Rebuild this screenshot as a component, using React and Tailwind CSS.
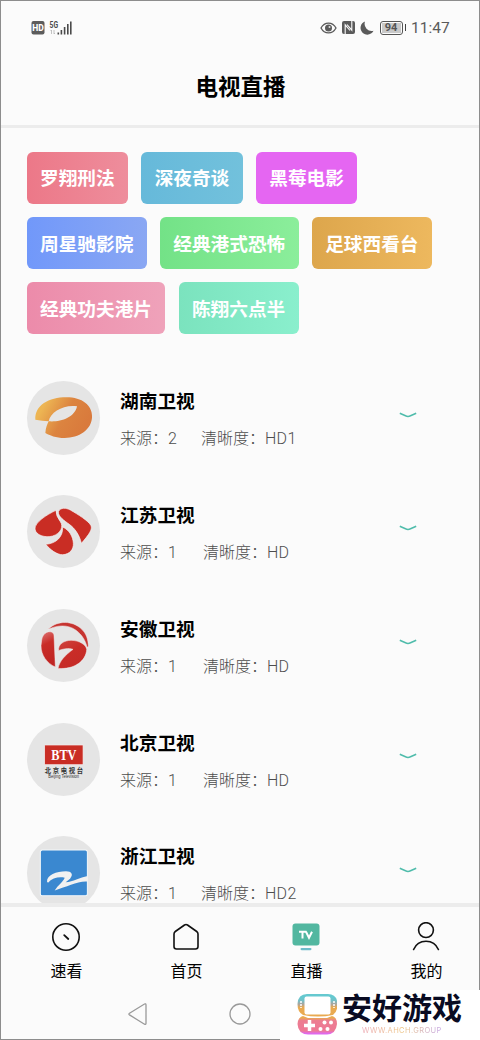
import React, { useState } from 'react';

const tags = [
  { name: '罗翔刑法', color: 'bg-linear-to-r from-[#ec7888] to-[#ee8d9c]' },
  { name: '深夜奇谈', color: 'bg-linear-to-r from-[#66b9da] to-[#72c1dc]' },
  { name: '黑莓电影', color: 'bg-[#e566f2]' },
  { name: '周星驰影院', color: 'bg-linear-to-r from-[#7198fa] to-[#8aa7f3]' },
  { name: '经典港式恐怖', color: 'bg-linear-to-r from-[#73e287] to-[#8bee9b]' },
  { name: '足球西看台', color: 'bg-linear-to-r from-[#dda64c] to-[#edb85e]' },
  { name: '经典功夫港片', color: 'bg-linear-to-r from-[#ec8baa] to-[#efa2ba]' },
  { name: '陈翔六点半', color: 'bg-linear-to-r from-[#7be3be] to-[#8aefcd]' },
];

const HunanLogo = () => (
  <svg viewBox="80 62 220 220" className="h-full w-full">
    <defs>
      <linearGradient id="hunan" x1="0" y1="0" x2="1" y2="0.4">
        <stop offset="0.2" stopColor="#edb553" />
        <stop offset="0.6" stopColor="#dc8440" />
        <stop offset="1" stopColor="#d97a3c" />
      </linearGradient>
    </defs>
    <path
      d="M105 178C103 135 145 111 198 111C246 111 275 135 275 168C275 209 235 233 193 233C166 233 148 225 135 218C136 204 140 193 145 183Q126 181 105 178ZM145 183C178 186 223 173 230 138C190 132 150 155 145 183Z"
      fill="url(#hunan)"
      fillRule="evenodd"
    />
  </svg>
);

const JiangsuLogo = () => (
  <svg viewBox="80 403 220 220" className="h-full w-full">
    <g fill="#c92d24" stroke="#f7f5f5" strokeWidth="2">
      <path d="M167 449C139 462 103 485 104 505C106 524 135 532 157 526C182 518 190 497 180 483Q166 465 167 449Z" />
      <path d="M174 453C180 440 197 441 210 448C232 461 264 480 272 495C276 507 267 520 243 548C237 521 222 502 207 491C192 480 173 468 174 453Z" />
      <path d="M187 499C188 528 169 548 136 551C151 568 169 582 187 582C208 581 220 566 219 548C218 528 207 508 187 499Z" />
    </g>
  </svg>
);

const AnhuiLogo = () => (
  <svg viewBox="80 55 220 220" className="h-full w-full">
    <defs>
      <linearGradient id="anhui" x1="0" y1="0" x2="0.2" y2="1">
        <stop offset="0" stopColor="#dd7777" />
        <stop offset="0.4" stopColor="#c92d28" />
        <stop offset="1" stopColor="#bf2422" />
      </linearGradient>
      <linearGradient id="anhui-leaf" x1="0" y1="0" x2="0.6" y2="1">
        <stop offset="0" stopColor="#cf4640" />
        <stop offset="0.5" stopColor="#c92d28" />
        <stop offset="1" stopColor="#c42a26" />
      </linearGradient>
    </defs>
    <g stroke="#f5efef" strokeWidth="1.5">
      <path d="M143 116C174 86 218 92 241 113C259 129 263 146 264 167L260 170C256 151 246 133 226 118C202 101 171 103 143 116Z" fill="#c63430" />
      <path d="M124 148C127 124 149 118 158 127Q161 130 161 136L165 229C139 217 122 193 122 165Z" fill="url(#anhui)" />
      <path d="M175 180C172 160 192 149 212 149C238 149 257 163 259 176C257 211 222 237 173 233C178 210 194 194 218 176C205 171 185 175 175 180Z" fill="url(#anhui-leaf)" />
    </g>
  </svg>
);

const BeijingLogo = () => (
  <svg viewBox="80 396 220 220" className="h-full w-full">
    <rect x="133" y="462" width="115" height="59" fill="#c92d24" stroke="#f6eded" strokeWidth="2" />
    <text x="190.500" y="507" textAnchor="middle" textLength="76" lengthAdjust="spacingAndGlyphs" fontSize="46" fontWeight="700" fill="#fff" fontFamily="Liberation Serif, serif">BTV</text>
    <text x="133" y="546" textLength="115" fontSize="19" fontWeight="700" fill="#333" fontFamily="Noto Sans CJK SC, sans-serif">北京电视台</text>
    <text x="144" y="561" textLength="92" lengthAdjust="spacingAndGlyphs" fontSize="14" fill="#333" fontFamily="Liberation Sans, sans-serif">Beijing Television</text>
  </svg>
);

const ZhejiangLogo = () => (
  <svg viewBox="80 47 220 220" className="h-full w-full">
    <rect x="120" y="89" width="141" height="137" rx="6" fill="#3a88d0" stroke="#f3f8fa" strokeWidth="3" />
    <path
      d="M140 184C139 165 168 153 197 153C214 153 220 163 209 175L196 186C218 184 238 171 262 167V184C233 181 200 200 163 210C174 193 189 184 193 172C176 168 155 173 143 187Z"
      fill="#f1f1f1"
    />
  </svg>
);

const channels = [
  { name: '湖南卫视', source: 2, quality: 'HD1', Logo: HunanLogo },
  { name: '江苏卫视', source: 1, quality: 'HD', Logo: JiangsuLogo },
  { name: '安徽卫视', source: 1, quality: 'HD', Logo: AnhuiLogo },
  { name: '北京卫视', source: 1, quality: 'HD', Logo: BeijingLogo },
  { name: '浙江卫视', source: 1, quality: 'HD2', Logo: ZhejiangLogo },
];

const StatusBar = () => (
  <div className="flex h-[53px] items-center justify-between pr-[31px] pl-[30px] text-[#5a5a5a]">
    <div className="flex items-center gap-1">
      <svg width="14" height="14" viewBox="0 0 14 14">
        <rect x="0.500" width="13" height="13.500" rx="2" fill="#5c5c5c" />
        <text x="7" y="10" textAnchor="middle" fontSize="8.500" fontWeight="800" fill="#fff" fontFamily="Roboto, sans-serif">HD</text>
      </svg>
      <svg width="24" height="16" viewBox="0 0 24 16" fill="#4a4a4a">
        <text x="0.500" y="7.500" textLength="8.500" lengthAdjust="spacingAndGlyphs" fontSize="8.500" fontWeight="700" fontFamily="Roboto, sans-serif">5G</text>
        <path d="M2.500 10v4M1.500 11l1-1M5 10v4l1-1" fill="none" stroke="#b5b5b5" strokeWidth="0.800" />
        <rect x="8.500" y="12.500" width="1.600" height="2" />
        <rect x="11.600" y="10" width="1.600" height="4.500" />
        <rect x="14.800" y="7" width="1.600" height="7.500" />
        <rect x="18" y="4" width="1.600" height="10.500" />
        <rect x="21" y="1.500" width="1.600" height="13" />
      </svg>
    </div>
    <div className="flex items-center">
      <svg width="17" height="14" viewBox="0 0 17 14">
        <path d="M1 7C4.500 0.500 12.500 0.500 16 7C12.500 13.500 4.500 13.500 1 7Z" fill="none" stroke="currentColor" strokeWidth="1.300" />
        <circle cx="8.500" cy="7" r="3.500" fill="currentColor" />
        <circle cx="9.500" cy="6" r="1" fill="#ddd" />
      </svg>
      <svg width="13" height="13" viewBox="0 0 13 13" className="ml-[5px]">
        <rect width="13" height="13" rx="2" fill="currentColor" />
        <path d="M3.200 13V3.800L8 9.500M9.800 0V9.200L5 3.500" fill="none" stroke="#fbfbfb" strokeWidth="1.100" />
      </svg>
      <svg width="14" height="14" viewBox="0 0 14 14" className="ml-[5px]">
        <path d="M5 0.500A6.800 6.800 0 1 0 13.500 9.800A7.200 7.200 0 0 1 5 0.500Z" fill="currentColor" />
      </svg>
      <div className="ml-[6px] flex h-[14px] w-[23px] items-center justify-center rounded-[3px] border border-[#555] p-px">
        <span className="flex h-full w-full items-center justify-center bg-[#c9c9c9] text-[11px] leading-none font-bold text-[#555]">94</span>
      </div>
      <span className="ml-[2px] h-[7px] w-[1.500px] bg-[#444]" />
      <span className="mt-[2px] ml-[5px] w-[37px] text-[15.500px] leading-none font-normal whitespace-nowrap">11:47</span>
    </div>
  </div>
);

const ChannelRow = ({ channel }) => {
  const { name, source, quality, Logo } = channel;
  return (
    <div className="flex h-[113.800px] shrink-0 items-start pl-[25.700px]">
      <div className="h-[73.400px] w-[73.400px] overflow-hidden rounded-full bg-[#e5e5e5]">
        <Logo />
      </div>
      <div className="ml-[20px] w-[280px] pt-[7px]">
        <div className="text-[18.670px] leading-[28px] font-bold text-black">{name}</div>
        <div className="mt-[11px] flex text-[16px] leading-[24px] font-light text-[#4d4d4d]">
          <span>来源：{source}</span>
          <span className={quality === 'HD' ? 'ml-[26px]' : 'ml-[24px]'}>
            清晰度：<span className="tracking-[0.300px]">{quality}</span>
          </span>
        </div>
      </div>
      <svg width="18" height="6" viewBox="0 0 18 6" className="mt-[30.500px] -ml-px">
        <path d="M0.800 1.200L6.500 3.800Q9 5 11.500 3.800L17.200 1.200" fill="none" stroke="#4fbcab" strokeWidth="1.500" />
      </svg>
    </div>
  );
};

const tabs = [
  {
    name: '速看',
    icon: (
      <g fill="none" stroke="#111" strokeWidth="1.600" strokeLinecap="round">
        <circle cx="15" cy="15" r="13.200" />
        <path d="M13.200 13.200L17.300 17" strokeWidth="1.800" />
      </g>
    ),
  },
  {
    name: '首页',
    icon: (
      <path d="M3 12Q3 10.500 4.300 9.500L13.500 3Q15 2 16.500 3L25.700 9.500Q27 10.500 27 12V24.500Q27 27 24.500 27H5.500Q3 27 3 24.500Z" fill="none" stroke="#111" strokeWidth="1.600" />
    ),
  },
  {
    name: '直播',
    icon: (
      <g>
        <rect x="1.500" y="1.500" width="27" height="22" rx="3" fill="#52b7a0" />
        <path d="M8 9.800H15.500M11.500 9.800V16.500M15 9.800L18 15.800L21 9.800" fill="none" stroke="#fff" strokeWidth="2" />
        <rect x="9.500" y="26" width="11" height="2.200" rx="1.100" fill="#6fbcca" />
      </g>
    ),
  },
  {
    name: '我的',
    icon: (
      <g fill="none" stroke="#111" strokeWidth="1.600" strokeLinecap="round">
        <circle cx="15" cy="8.100" r="7.400" />
        <path d="M2.600 27.500C7.200 16.500 22.800 16.500 27.400 27.500" />
      </g>
    ),
  },
];

const Watermark = () => (
  <div className="absolute right-0 bottom-0 flex h-[50px] w-[200px] bg-white pl-[17px]">
    <svg width="40" height="42" viewBox="0 0 40 42" className="mt-[3px]">
      <defs>
        <linearGradient id="console-top" x1="0" y1="0" x2="0" y2="1">
          <stop offset="0.150" stopColor="#66c9d0" />
          <stop offset="0.300" stopColor="#76bfc6" />
          <stop offset="0.450" stopColor="#aaa5a0" />
          <stop offset="0.600" stopColor="#e9aa50" />
        </linearGradient>
        <linearGradient id="console-bottom" x1="0" y1="0" x2="0" y2="1">
          <stop offset="0.100" stopColor="#e9aa50" />
          <stop offset="0.250" stopColor="#ec7d91" />
          <stop offset="0.800" stopColor="#ee7896" />
          <stop offset="0.950" stopColor="#df68ee" />
        </linearGradient>
      </defs>
      <path d="M10 1H31Q40 1 40.500 11Q40.500 19 36 22Q21 25 6 22Q0.500 19 0.500 11Q1 1 10 1Z" fill="url(#console-top)" />
      <rect x="7.500" y="3.500" width="26" height="18" rx="2" fill="#fff" />
      <path d="M4 8v7M37 8v7" stroke="#fff" strokeWidth="1.500" strokeDasharray="2 1" />
      <path d="M6 23L11 25H30L35 23Q40 24 40 31Q39 41 30 41.500H11Q1 41 0.500 31Q1 24 6 23Z" fill="url(#console-bottom)" />
      <path d="M12.500 27v11M7 32.500h11" stroke="#fff" strokeWidth="3.500" />
      <g fill="#fff">
        <circle cx="27.500" cy="29.500" r="2" />
        <circle cx="34" cy="29.500" r="2" />
        <circle cx="23.500" cy="36" r="2" />
        <circle cx="30.500" cy="36" r="2" />
      </g>
    </svg>
    <div className="ml-[5px] flex flex-col whitespace-nowrap">
      <span className="mt-[2px] text-[30px] leading-[34px] font-bold text-[#090b22]">安好游戏</span>
      <span className="mt-px ml-[20px] w-[80px] bg-linear-to-r from-[#edacb7] via-[#edc27d] to-[#c5a5e5] bg-clip-text font-['Inter'] text-[7.500px] leading-[8px] tracking-[0.400px] text-transparent">
        WWW.AHCH.GROUP
      </span>
    </div>
  </div>
);

const App = () => {
  const [activeTab, setActiveTab] = useState('直播');

  return (
    <div lang="zh-CN" className="relative w-[480px] overflow-hidden font-['Roboto','Noto_Sans_CJK_SC',sans-serif]">
      <div className="flex h-[1040px] flex-col overflow-hidden border border-[#8d8d8d] bg-[#fbfbfb]">
        <StatusBar />
        <header className="flex h-[74px] items-center justify-center border-b-3 border-[#ececec] pb-[6px]">
          <h1 className="pl-px text-[22.500px] leading-[34px] font-bold text-black">电视直播</h1>
        </header>

        {/* 频道列表 */}
        <main className="flex min-h-0 flex-1 flex-col overflow-hidden">
          <div className="flex shrink-0 flex-wrap gap-[13.330px] pt-[23.700px] pr-[20px] pl-[25.700px]">
            {tags.map((tag) => (
              <button key={tag.name} className={`h-[52px] rounded-md px-[13.330px] pt-[3px] text-[18.670px] font-bold text-white ${tag.color}`}>
                {tag.name}
              </button>
            ))}
          </div>
          <div className="mt-[46.800px] flex flex-col">
            {channels.map((channel) => (
              <ChannelRow key={channel.name} channel={channel} />
            ))}
          </div>
        </main>

        {/* 底部导航 */}
        <nav className="flex h-[87px] shrink-0 border-t-4 border-[#ececec] pl-[5px]">
          {tabs.map((tab) => (
            <button
              key={tab.name}
              onClick={() => setActiveTab(tab.name)}
              aria-pressed={activeTab === tab.name}
              className="flex w-[120px] shrink-0 flex-col items-center pt-[15.400px] text-[16px] leading-[24px] text-black"
            >
              <svg width="30" height="30" viewBox="0 0 30 30">{tab.icon}</svg>
              <span className="mt-[8px] pl-px">{tab.name}</span>
            </button>
          ))}
        </nav>

        <div className="flex h-[49px] shrink-0 items-center pb-px pl-[126px]">
          <svg width="21" height="24" viewBox="0 0 21 24">
            <path d="M2.500 11.200Q1.200 12 2.500 12.900L17.500 22.200Q19 22.800 19 21.200V3Q19 1.300 17.500 2Z" fill="none" stroke="#999" strokeWidth="1.300" />
          </svg>
          <svg width="24" height="24" viewBox="0 0 24 24" className="ml-[80px]">
            <circle cx="12" cy="12" r="10" fill="none" stroke="#999" strokeWidth="1.300" />
          </svg>
        </div>
      </div>
      <Watermark />
    </div>
  );
};

export default App;
